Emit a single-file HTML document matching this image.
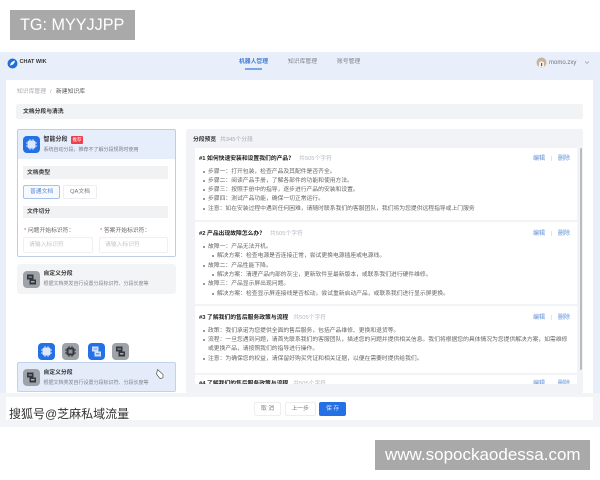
<!DOCTYPE html>
<html lang="zh"><head><meta charset="utf-8"><style>
*{box-sizing:border-box;margin:0;padding:0}
html,body{width:600px;height:480px;overflow:hidden;background:#fff}
body{position:relative;font-family:"Liberation Sans","Noto Sans CJK SC",sans-serif;color:#444}
.a{position:absolute}
.t{position:absolute;white-space:nowrap;line-height:10px;font-size:5.8px;color:#666;filter:blur(.35px)}
.b{font-weight:700;color:#333}
.h{font-size:5.8px;font-weight:700;color:#222}
.h span{font-weight:400;color:#b4b8bf;margin-left:3px}
.e{color:#5f8fd8;font-size:6px}
.i{position:absolute;width:17px;height:17px;border-radius:4px;background:#2470e6}
.g{background:#9ea2a9}
.i svg{position:absolute;left:0;top:0;width:17px;height:17px;filter:blur(.3px)}
.d{position:absolute;width:2px;height:2px;border-radius:50%;background:#777}
</style></head><body>
<div class="a" style="left:10px;top:10px;width:125px;height:30px;background:#a9a9a9"></div>
<div class="t" style="left:20px;top:15px;font-size:16.2px;line-height:20px;color:#fff;filter:none">TG: MYYJJPP</div>

<div class="a" style="left:0;top:52px;width:600px;height:375px;background:#e8effb"></div>
<div class="a" style="left:6px;top:80px;width:587px;height:347px;background:#fff"></div>
<div class="a" style="left:0;top:393px;width:600px;height:34px;background:#f2f4f7"></div>
<div class="a" style="left:6px;top:397px;width:587px;height:23px;background:#fff"></div>

<svg class="a" style="left:7px;top:58px;width:11px;height:11px" viewBox="0 0 11 11"><circle cx="5.500" cy="5.500" r="5" fill="#1f6fd8"/><path d="M3 7.500Q3.500 3.500 8 2.600Q7.500 7 3 7.500Z" fill="#fff"/></svg>
<div class="t b" style="left:19.500px;top:57px;font-size:5.500px;color:#333">CHAT WIK</div>
<div class="t b" style="left:239px;top:57px;color:#3e7ad6">机器人管理</div>
<div class="a" style="left:245px;top:68px;width:17px;height:1.500px;background:#7ba6e6"></div>
<div class="t" style="left:288px;top:57px;color:#7b8088">知识库管理</div>
<div class="t" style="left:337px;top:57px;color:#7b8088">账号管理</div>
<svg class="a" style="left:536px;top:57px;width:11px;height:11px" viewBox="0 0 11 11"><circle cx="5.500" cy="5.500" r="5" fill="#c9b39c"/><path d="M3 10V5.500Q5.500 3 8 5.500V10Z" fill="#f4eee8"/><path d="M5 6h1.200v3H5z" fill="#6b5a50"/></svg>
<div class="t" style="left:549px;top:58px;font-size:6px;color:#70757d">momo.zxy</div>
<svg class="a" style="left:584px;top:60px;width:6px;height:5px" viewBox="0 0 6 5"><path d="M1 1.500L3 3.500L5 1.500" fill="none" stroke="#8a8f96" stroke-width=".6"/></svg>

<div class="t" style="left:17px;top:87px;color:#a5a9b0">知识库管理</div>
<div class="t" style="left:50px;top:87px;color:#a5a9b0">/</div>
<div class="t" style="left:56px;top:87px;color:#555">新建知识库</div>
<div class="a" style="left:16px;top:104px;width:567px;height:15px;background:#f1f3f5;border-radius:2px"></div>
<div class="t b" style="left:23px;top:107px">文档分段与清洗</div>

<!-- left card -->
<div class="a" style="left:17px;top:129px;width:159px;height:128px;border:1px solid #bccde4;border-radius:2px;background:#fff"></div>
<div class="a" style="left:18px;top:130px;width:157px;height:29px;background:#e7eefb"></div>
<div class="i" style="left:23px;top:136px"><svg viewBox="0 0 17 17"><rect x="4.500" y="4.500" width="8" height="8" rx="2" fill="#dbe7fb"/><path d="M7 3v2M10 3v2M7 12v2M10 12v2M3 7h2M3 10h2M12 7h2M12 10h2" stroke="#cfe0fa" stroke-width=".9"/></svg></div>
<div class="t b" style="left:43.500px;top:135px;font-size:6px">智能分段</div>
<div class="a" style="left:71px;top:136px;width:12px;height:8px;background:#ee3f4a;border-radius:1px"></div>
<div class="t" style="left:72.500px;top:135px;font-size:4.500px;color:#fff">推荐</div>
<div class="t" style="left:43.500px;top:144.500px;font-size:5px;color:#7b818a">系统自动分段，推荐不了解分段规则时使用</div>
<div class="a" style="left:23px;top:166px;width:145px;height:13px;background:#f1f2f4"></div>
<div class="t b" style="left:27px;top:167.500px;color:#444">文档类型</div>
<div class="a" style="left:23px;top:185px;width:37px;height:14px;border:1px solid #a9c3e6;border-radius:2px;background:#f6f9fe"></div>
<div class="t" style="left:30px;top:187px;color:#5b8ad0">普通文档</div>
<div class="a" style="left:63px;top:185px;width:34px;height:14px;border:1px solid #eceef1;border-radius:2px"></div>
<div class="t" style="left:70px;top:187px;color:#777">QA文档</div>
<div class="a" style="left:23px;top:206px;width:145px;height:12px;background:#f1f2f4"></div>
<div class="t b" style="left:27px;top:207px;color:#444">文件切分</div>
<div class="t" style="left:24px;top:226px;color:#666"><span style="color:#e55">*</span> 问题开始标识符：</div>
<div class="t" style="left:100px;top:226px;color:#666"><span style="color:#e55">*</span> 答案开始标识符：</div>
<div class="a" style="left:23px;top:237px;width:70px;height:16px;border:1px solid #eef0f2;border-radius:2px"></div>
<div class="a" style="left:99px;top:237px;width:69px;height:16px;border:1px solid #eef0f2;border-radius:2px"></div>
<div class="t" style="left:29px;top:239.500px;color:#c3c6cb">请输入标识符</div>
<div class="t" style="left:105px;top:239.500px;color:#c3c6cb">请输入标识符</div>

<!-- custom card -->
<div class="a" style="left:17px;top:264px;width:159px;height:30px;background:#f3f4f6;border-radius:3px"></div>
<div class="i g" style="left:23px;top:271px"><svg viewBox="0 0 17 17"><path d="M4 3.500h6.500v5H13v5H6.500v-5H4z" fill="#34373d"/><path d="M5.500 5.500h3.500v1H5.500zM8 10h3.500v1.500H8z" fill="#a9adb3"/></svg></div>
<div class="t b" style="left:43.500px;top:269px">自定义分段</div>
<div class="t" style="left:43.500px;top:279px;font-size:5px;color:#80858d">根据文档类发自行设置分段标识符、分段长度等</div>

<!-- icon row -->
<div class="i" style="left:38px;top:343px"><svg viewBox="0 0 17 17"><rect x="4.500" y="4.500" width="8" height="8" rx="2" fill="#dbe7fb"/><path d="M7 3v2M10 3v2M7 12v2M10 12v2M3 7h2M3 10h2M12 7h2M12 10h2" stroke="#cfe0fa" stroke-width=".9"/></svg></div>
<div class="i g" style="left:62px;top:343px"><svg viewBox="0 0 17 17"><rect x="4.500" y="4.500" width="8" height="8" rx="2" fill="#34373d"/><rect x="6.500" y="6.500" width="4" height="4" fill="#8d9198"/><path d="M7 3v2M10 3v2M7 12v2M10 12v2M3 7h2M3 10h2M12 7h2M12 10h2" stroke="#34373d" stroke-width=".9"/></svg></div>
<div class="i" style="left:88px;top:343px"><svg viewBox="0 0 17 17"><path d="M4 3.500h6.500v5H13v5H6.500v-5H4z" fill="#cfe0fa"/><path d="M5.500 5.500h3.500v1H5.500zM8 10h3.500v1.500H8z" fill="#6b9ceb"/></svg></div>
<div class="i g" style="left:112px;top:343px"><svg viewBox="0 0 17 17"><path d="M4 3.500h6.500v5H13v5H6.500v-5H4z" fill="#34373d"/><path d="M5.500 5.500h3.500v1H5.500zM8 10h3.500v1.500H8z" fill="#a9adb3"/></svg></div>

<div class="a" style="left:17px;top:362px;width:159px;height:30px;background:#e4ebf9;border:1px solid #c2d2ec;border-radius:2px"></div>
<div class="i g" style="left:23px;top:369px"><svg viewBox="0 0 17 17"><path d="M4 3.500h6.500v5H13v5H6.500v-5H4z" fill="#34373d"/><path d="M5.500 5.500h3.500v1H5.500zM8 10h3.500v1.500H8z" fill="#a9adb3"/></svg></div>
<div class="t b" style="left:43.500px;top:368px">自定义分段</div>
<div class="t" style="left:43.500px;top:377.500px;font-size:5px;color:#80858d">根据文档类发自行设置分段标识符、分段长度等</div>
<svg class="a" style="left:155px;top:368px;width:10px;height:12px" viewBox="0 0 10 12"><path d="M2.500 1.500L8 6.500L8 9.500Q6.500 11 4.500 10L1.500 6Z" fill="#fff" stroke="#555" stroke-width=".7"/></svg>

<!-- right panel -->
<div class="a" style="left:186px;top:129px;width:397px;height:264px;background:#f1f3f6;border-radius:2px"></div>
<div class="t b" style="left:193px;top:135px">分段预览</div>
<div class="t" style="left:220px;top:135px;color:#a5a9b0">共345个分段</div>
<div class="a" style="left:195px;top:148px;width:382px;height:72px;background:#fff"></div>
<div class="a" style="left:195px;top:222px;width:382px;height:82px;background:#fff"></div>
<div class="a" style="left:195px;top:306px;width:382px;height:67px;background:#fff"></div>
<div class="a" style="left:195px;top:375px;width:382px;height:9px;background:#fff"></div>
<div class="a" style="left:579.500px;top:148px;width:2px;height:222px;background:#b9bbbe;border-radius:1px"></div>

<div class="t h" style="left:199px;top:154px">#1 如何快速安装和设置我们的产品？<span style="margin-left:5px">共505个字符</span></div>
<div class="t e" style="left:533px;top:154px">编辑</div><div class="a" style="left:551px;top:156px;width:1px;height:5px;background:#dfe3ea"></div><div class="t e" style="left:558px;top:154px">删除</div>
<div class="d" style="left:203px;top:171px"></div><div class="t" style="left:208px;top:167px">步骤一：打开包装，检查产品及其配件是否齐全。</div>
<div class="d" style="left:203px;top:180px"></div><div class="t" style="left:208px;top:176px">步骤二：阅读产品手册，了解各部件的功能和使用方法。</div>
<div class="d" style="left:203px;top:189px"></div><div class="t" style="left:208px;top:185px">步骤三：按照手册中的指导，逐步进行产品的安装和设置。</div>
<div class="d" style="left:203px;top:198px"></div><div class="t" style="left:208px;top:194px">步骤四：测试产品功能，确保一切正常运行。</div>
<div class="d" style="left:203px;top:208px"></div><div class="t" style="left:208px;top:204px">注意：如在安装过程中遇到任何困难，请随时联系我们的客服团队，我们将为您提供远程指导或上门服务</div>

<div class="t h" style="left:199px;top:229px">#2 产品出现故障怎么办？<span style="margin-left:5px">共505个字符</span></div>
<div class="t e" style="left:533px;top:229px">编辑</div><div class="a" style="left:551px;top:231px;width:1px;height:5px;background:#dfe3ea"></div><div class="t e" style="left:558px;top:229px">删除</div>
<div class="d" style="left:203px;top:246px"></div><div class="t" style="left:208px;top:242px">故障一：产品无法开机。</div>
<div class="d" style="left:212px;top:255px"></div><div class="t" style="left:217px;top:251px">解决方案：检查电源是否连接正常，尝试更换电源插座或电源线。</div>
<div class="d" style="left:203px;top:265px"></div><div class="t" style="left:208px;top:261px">故障二：产品性能下降。</div>
<div class="d" style="left:212px;top:274px"></div><div class="t" style="left:217px;top:270px">解决方案：清理产品内部的灰尘，更新软件至最新版本，或联系我们进行硬件维修。</div>
<div class="d" style="left:203px;top:283px"></div><div class="t" style="left:208px;top:279px">故障三：产品显示屏出现问题。</div>
<div class="d" style="left:212px;top:293px"></div><div class="t" style="left:217px;top:289px">解决方案：检查显示屏连接线是否松动，尝试重新启动产品，或联系我们进行显示屏更换。</div>

<div class="t h" style="left:199px;top:313px">#3 了解我们的售后服务政策与流程<span style="margin-left:5px">共505个字符</span></div>
<div class="t e" style="left:533px;top:313px">编辑</div><div class="a" style="left:551px;top:315px;width:1px;height:5px;background:#dfe3ea"></div><div class="t e" style="left:558px;top:313px">删除</div>
<div class="d" style="left:203px;top:330px"></div><div class="t" style="left:208px;top:326px">政策：我们承诺为您提供全面的售后服务，包括产品维修、更换和退货等。</div>
<div class="d" style="left:203px;top:339px"></div><div class="t" style="left:208px;top:335px">流程：一旦您遇到问题，请首先联系我们的客服团队，描述您的问题并提供相关信息。我们将根据您的具体情况为您提供解决方案，如需维修</div>
<div class="t" style="left:208px;top:344px">或更换产品，请按照我们的指导进行操作。</div>
<div class="d" style="left:203px;top:358px"></div><div class="t" style="left:208px;top:354px">注意：为确保您的权益，请保留好购买凭证和相关证据，以便在需要时提供给我们。</div>

<div class="a" style="left:199px;top:375px;width:378px;height:9px;overflow:hidden"><div class="t h" style="left:0;top:4px">#4 了解我们的售后服务政策与流程<span style="margin-left:5px">共505个字符</span></div><div class="t e" style="left:334px;top:4px">编辑</div><div class="t e" style="left:359px;top:4px">删除</div></div>

<!-- footer -->
<div class="a" style="left:254px;top:402px;width:27px;height:14px;border:1px solid #eceef1;border-radius:2px;background:#fff"></div>
<div class="t" style="left:261px;top:404px;color:#777">取 消</div>
<div class="a" style="left:285px;top:402px;width:31px;height:14px;border:1px solid #eceef1;border-radius:2px;background:#fff"></div>
<div class="t" style="left:291.500px;top:404px;color:#777">上一步</div>
<div class="a" style="left:319px;top:402px;width:27px;height:14px;border-radius:2px;background:#2470e6"></div>
<div class="t" style="left:326px;top:404px;color:#dfeaff">保 存</div>

<div class="t" style="left:9px;top:406px;font-size:12px;line-height:16px;color:#333;filter:none;text-shadow:0 0 1px #fff,0 0 1px #fff">搜狐号@芝麻私域流量</div>

<div class="a" style="left:375px;top:440px;width:215px;height:30px;background:#a9a9a9"></div>
<div class="t" style="left:385px;top:445px;font-size:17px;line-height:20px;color:#fff;filter:none">www.sopockaodessa.com</div>
</body></html>
